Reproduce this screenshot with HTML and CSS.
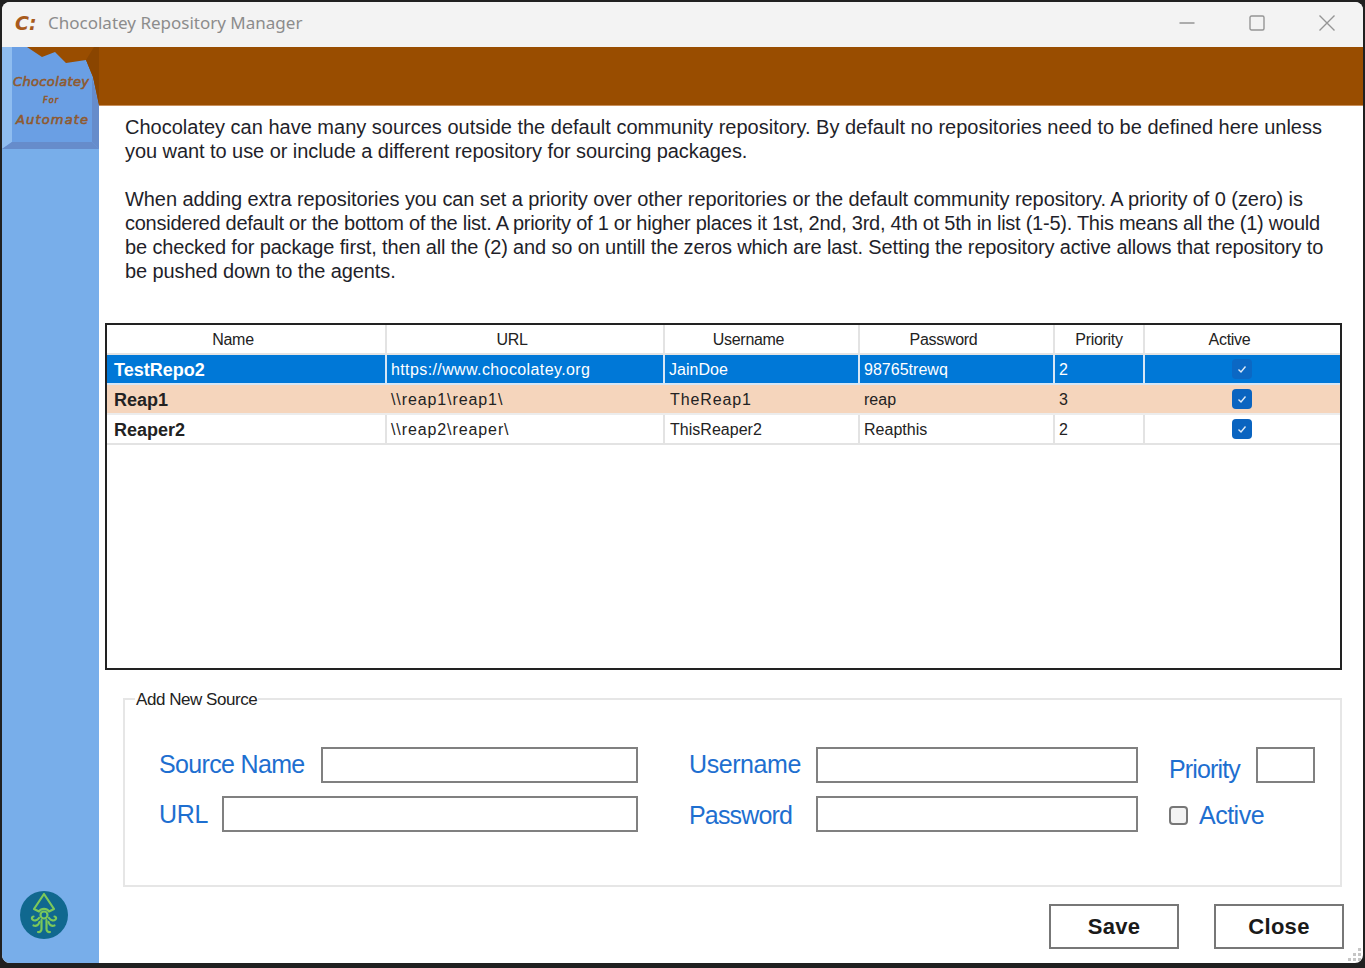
FILE: index.html
```html
<!DOCTYPE html>
<html lang="en">
<head>
<meta charset="utf-8">
<title>Chocolatey Repository Manager</title>
<link rel="stylesheet" href="styles.css">
</head>
<body>
<div class="window">
  <header class="titlebar">
    <span class="app-mark">C:</span>
    <span class="app-title">Chocolatey Repository Manager</span>
    <div class="controls">
      <svg class="ctl ctl-min" width="16" height="16" viewBox="0 0 16 16"><path d="M0.500 8h15" /></svg>
      <svg class="ctl ctl-max" width="16" height="16" viewBox="0 0 16 16"><rect x="1" y="1" width="14" height="14" rx="1.5" /></svg>
      <svg class="ctl ctl-close" width="16" height="16" viewBox="0 0 16 16"><path d="M0.500 0.500l15 15M15.500 0.500l-15 15" /></svg>
    </div>
  </header>
  <div class="body">
    <aside class="sidebar">
      <svg class="squid" width="50" height="50" viewBox="0 0 50 50">
        <circle cx="25" cy="25" r="24" fill="#10688f"/>
        <g fill="none" stroke="#7cc85a" stroke-width="2.200" stroke-linecap="round" stroke-linejoin="round">
          <path d="M25 4L15 19l5 2.500a6 6 0 0 1 10 0l5-2.500z"/>
          <circle cx="25" cy="25" r="3.500"/>
          <path d="M22.500 30v9c0 2-1.500 3.500-3.500 3"/>
          <path d="M27.500 30v9c0 2 1.500 3.500 3.500 3"/>
          <path d="M20 28c-2 3-5 3-6.500 1.500-1.200-1.200-.5-3 1-3"/>
          <path d="M30 28c2 3 5 3 6.500 1.500 1.200-1.200.5-3-1-3"/>
          <path d="M20.500 32c-1 3-3 4.500-6 3.500"/>
          <path d="M29.500 32c1 3 3 4.500 6 3.500"/>
        </g>
      </svg>
    </aside>
    <main class="main">
      <div class="banner"></div>
      <div class="intro">
        <p>
          <span class="line">Chocolatey can have many sources outside the default community repository. By default no repositories need to be defined here unless</span>
          <span class="line ln-b">you want to use or include a different repository for sourcing packages.</span>
        </p>
        <p>
          <span class="line ln-c">When adding extra repositories you can set a priority over other reporitories or the default community repository. A priority of 0 (zero) is</span>
          <span class="line ln-d">considered default or the bottom of the list. A priority of 1 or higher places it 1st, 2nd, 3rd, 4th ot 5th in list (1-5). This means all the (1) would</span>
          <span class="line ln-e">be checked for package first, then all the (2) and so on untill the zeros which are last. Setting the repository active allows that repository to</span>
          <span class="line ln-f">be pushed down to the agents.</span>
        </p>
      </div>
      <div class="grid-frame">
        <table class="grid">
          <colgroup>
            <col class="c-name"><col class="c-url"><col class="c-user"><col class="c-pass"><col class="c-prio"><col class="c-act">
          </colgroup>
          <thead>
            <tr><th>Name</th><th>URL</th><th>Username</th><th>Password</th><th class="th-prio">Priority</th><th>Active</th></tr>
          </thead>
          <tbody>
            <tr class="row-selected">
              <td class="name">TestRepo2</td><td class="sp-a">https://www.chocolatey.org</td><td class="sp-c">JainDoe</td><td class="sp-c">98765trewq</td><td>2</td>
              <td class="check-cell"><span class="tick tick-dim"><svg width="12" height="12" viewBox="0 0 12 12"><path d="M2.500 6.500l2.500 2.500 4.500-5.500"/></svg></span></td>
            </tr>
            <tr class="row-alt">
              <td class="name">Reap1</td><td class="sp-b">\\reap1\reap1\</td><td class="sp-b pad-user">TheReap1</td><td class="sp-c">reap</td><td>3</td>
              <td class="check-cell"><span class="tick"><svg width="12" height="12" viewBox="0 0 12 12"><path d="M2.500 6.500l2.500 2.500 4.500-5.500"/></svg></span></td>
            </tr>
            <tr>
              <td class="name">Reaper2</td><td class="sp-b">\\reap2\reaper\</td><td class="sp-c pad-user">ThisReaper2</td><td class="sp-c">Reapthis</td><td>2</td>
              <td class="check-cell"><span class="tick"><svg width="12" height="12" viewBox="0 0 12 12"><path d="M2.500 6.500l2.500 2.500 4.500-5.500"/></svg></span></td>
            </tr>
          </tbody>
        </table>
      </div>
      <fieldset class="source">
        <legend>Add New Source</legend>
        <div class="form">
          <div class="col col-a">
            <div class="field"><label class="lbl lbl-tight lbl-up">Source Name</label><input class="box box-name" type="text"></div>
            <div class="field"><label class="lbl">URL</label><input class="box box-url" type="text"></div>
          </div>
          <div class="col col-b">
            <div class="field"><label class="lbl lbl-user lbl-up">Username</label><input class="box box-user" type="text"></div>
            <div class="field"><label class="lbl lbl-tighter lbl-down">Password</label><input class="box box-user" type="text"></div>
          </div>
          <div class="col col-c">
            <div class="field"><label class="lbl lbl-tighter lbl-prio">Priority</label><input class="box box-prio" type="text"></div>
            <div class="field field-check"><span class="check-empty"></span><label class="lbl lbl-down lbl-active">Active</label></div>
          </div>
        </div>
      </fieldset>
      <div class="actions">
        <button class="btn" type="button">Save</button>
        <button class="btn" type="button">Close</button>
      </div>
      <svg class="grip" width="15" height="15" viewBox="0 0 15 15" fill="#c6c6c6">
        <rect x="11" y="1" width="3" height="3"/><rect x="6" y="6" width="3" height="3"/><rect x="11" y="6" width="3" height="3"/>
        <rect x="1" y="11" width="3" height="3"/><rect x="6" y="11" width="3" height="3"/><rect x="11" y="11" width="3" height="3"/>
      </svg>
    </main>
    <svg class="ribbon" width="97" height="105" viewBox="0 0 97 105">
      <rect x="0" y="0" width="97" height="102" fill="#6a9fe4"/>
      <path d="M0 0h10v95L0 102z" fill="#8fbdf0"/>
      <path d="M0 102l10-7h80l7 7z" fill="#668ccb"/>
      <path d="M90 30l7 28v44l-7-7z" fill="#668ccb"/>
      <path d="M25 0l15 10 13-5 11 11 20-3 7 17 6 28V0z" fill="#994d00"/>
      <path d="M84 13l7 17 6 28V0h-5z" fill="#8a4500"/>
      <g class="ribbon-text">
        <text x="11" y="39" textLength="76" font-size="13">Chocolatey</text>
        <text x="41" y="56" textLength="15" font-size="8">For</text>
        <text x="14" y="77" textLength="72" font-size="13">Automate</text>
      </g>
    </svg>
  </div>
</div>
</body>
</html>
```
FILE: styles.css
```css
* { box-sizing: border-box; }
html, body { margin: 0; padding: 0; height: 100%; }
body { background: #202020; font-family: "Liberation Sans", Arial, sans-serif; overflow: hidden; }
.window { position: relative; margin: 2px 2px 0; width: 1361px; height: 961px; border-radius: 8px; overflow: hidden; background: #fff; display: flex; flex-direction: column; }
.titlebar { height: 45px; flex: none; background: #f3f3f3; display: flex; align-items: center; padding: 0 0 4px 13px; }
.app-mark { width: 33px; font: oblique bold 19px "DejaVu Sans", sans-serif; color: #a85a1c; }
.app-title { font: 17px "Noto Sans", sans-serif; color: #8c8c8c; }
.controls { margin-left: auto; display: flex; padding-right: 28px; gap: 54px; align-items: center; }
.ctl { fill: none; stroke: #959595; stroke-width: 1.4; display: block; }
.body { flex: 1; display: flex; position: relative; min-height: 0; }
.sidebar { width: 97px; flex: none; background: #78aeea; display: flex; align-items: flex-end; padding: 0 0 23px 17px; }
.squid { display: block; }
.ribbon { position: absolute; left: 0; top: 0; }
.ribbon-text { font-family: "DejaVu Sans", sans-serif; font-style: oblique; fill: #8f5a30; stroke: #8f5a30; stroke-width: 0.6; }
.main { flex: 1; min-width: 0; position: relative; display: flex; flex-direction: column; }
.banner { height: 59px; flex: none; background: #994d00; border-bottom: 1px solid #c98f5a; }
.intro { padding: 9px 0 0 26px; font-size: 20px; line-height: 24px; color: #1f1f2a; height: 217px; flex: none; }
.intro p { margin: 0 0 24px; }
.line { display: block; white-space: nowrap; }
.ln-b { letter-spacing: -0.06px; }
.ln-c { letter-spacing: -0.08px; }
.ln-d { letter-spacing: -0.257px; }
.ln-e { letter-spacing: -0.14px; }
.ln-f { letter-spacing: -0.1px; }
.grid-frame { margin-left: 6px; width: 1237px; height: 347px; flex: none; border: 2px solid #222; background: #fff; }
.grid { border-collapse: collapse; table-layout: fixed; width: 1233px; font-size: 16px; color: #222; }
.c-name { width: 279px; } .c-url { width: 278px; } .c-user { width: 195px; } .c-pass { width: 195px; } .c-prio { width: 90px; } .c-act { width: 196px; }
.grid th { height: 29px; padding: 2px 26px 0 0; font-weight: normal; text-align: center; letter-spacing: -0.3px; border-right: 2px solid #e3e3e3; border-bottom: 2px solid #e3e3e3; }
.grid th.th-prio { padding-right: 0; }
.grid th:last-child, .grid td:last-child { border-right: 0; }
.grid td { height: 30px; padding: 2px 0 0 4px; border-right: 2px solid #e3e3e3; border-bottom: 2px solid #e3e3e3; white-space: nowrap; overflow: hidden; }
.grid td.name { font-weight: bold; font-size: 18px; padding-left: 7px; }
.grid td.sp-a { letter-spacing: 0.39px; }
.grid td.sp-b { letter-spacing: 0.9px; }
.grid td.sp-c { letter-spacing: 0.02px; }
.grid td.pad-user { padding-left: 5px; }
.grid .row-selected td { background: #0078d7; color: #fff; border-right-color: #d6e6f5; border-bottom-color: #d6e6f5; }
.grid .row-alt td { background: #f5d5bc; border-right-color: #f5d5bc; border-bottom-color: #ececec; }
.grid td.check-cell { padding: 0 2px 0 0; text-align: center; }
.tick { display: inline-flex; align-items: center; justify-content: center; width: 20px; height: 20px; border-radius: 4px; background: #0a64c0; vertical-align: middle; }
.tick-dim { background: #0b68c4; }
.tick svg { fill: none; stroke: #dfeaf6; stroke-width: 1.4; display: block; }
.source { margin: 20px 0 0 24px; padding: 0; width: 1219px; height: 197px; flex: none; border: 2px solid #e6e6e6; }
.source legend { margin-left: 10px; padding: 0 1px; font-size: 17px; line-height: 18px; color: #222; letter-spacing: -0.45px; transform: translateY(1px); }
.form { display: flex; padding: 39px 0 0 34px; }
.col { display: flex; flex-direction: column; gap: 13px; }
.col-a { width: 479px; }
.col-b { width: 449px; margin-left: 51px; }
.col-c { width: 146px; margin-left: 31px; }
.field { display: flex; align-items: center; height: 36px; justify-content: space-between; }
.field-check { justify-content: flex-start; gap: 11px; }
.lbl { font-size: 25px; color: #1e6fd0; letter-spacing: -0.3px; }
.lbl-tight { letter-spacing: -0.66px; }
.lbl-user { letter-spacing: -0.42px; }
.lbl-tighter { letter-spacing: -0.85px; }
.lbl-active { letter-spacing: -0.5px; }
.lbl-up { padding-bottom: 2px; }
.lbl-down { padding-top: 2px; }
.lbl-prio { padding-top: 8px; }
.box { height: 36px; border: 2px solid #808080; background: #fff; padding: 0; margin: 0; border-radius: 0; display: block; }
.box-name { width: 317px; }
.box-url { width: 416px; }
.box-user { width: 322px; }
.box-prio { width: 59px; }
.check-empty { width: 19px; height: 19px; border: 2px solid #777; border-radius: 4px; background: #f3f3f3; flex: none; margin-top: 2px; }
.actions { display: flex; justify-content: flex-end; gap: 35px; padding: 17px 19px 0 0; }
.btn { width: 130px; height: 45px; border: 2px solid #777; background: #fff; font: bold 22px "Liberation Sans", sans-serif; letter-spacing: 0.3px; color: #1a1a1a; padding: 0; }
.grip { position: absolute; right: 1px; bottom: 1px; }
```
